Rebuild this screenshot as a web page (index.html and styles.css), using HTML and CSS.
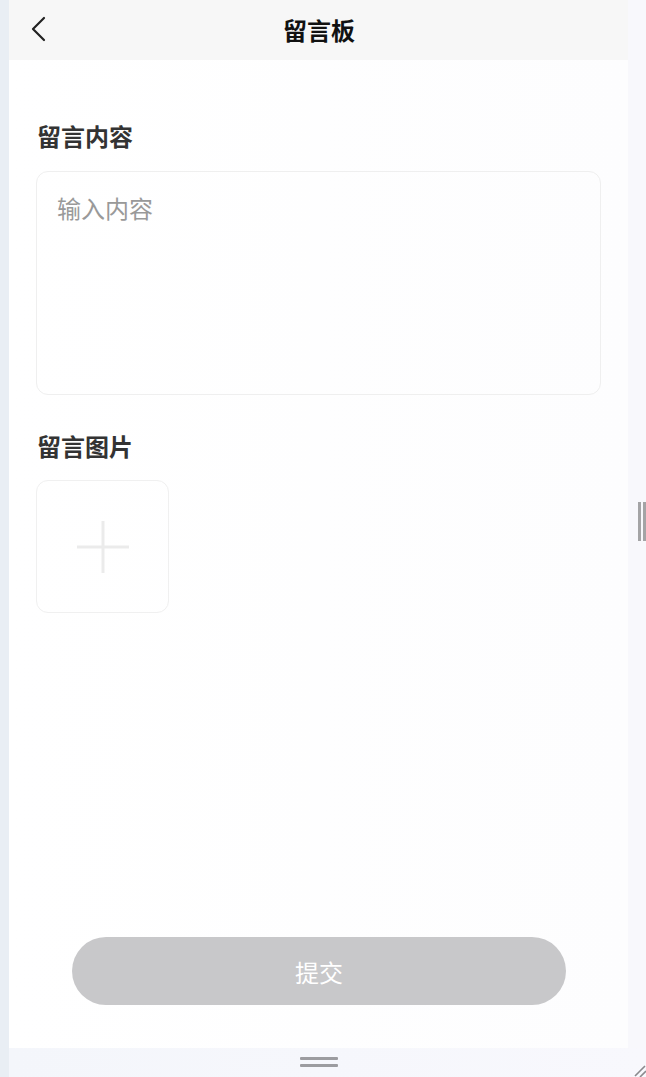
FILE: index.html
```html
<!DOCTYPE html>
<html lang="zh-CN">
<head>
<meta charset="utf-8">
<title>留言板</title>
<link rel="stylesheet" href="styles.css">
</head>
<body>
<div class="frame">
  <div class="left-strip"></div>
  <div class="right-col">
    <div class="row">
      <main class="app">
        <header class="topbar">
          <svg class="back" width="16" height="26" viewBox="0 0 16 26"><path d="M13 2 L2 13 L13 24" fill="none" stroke="#222" stroke-width="2.2" stroke-linecap="round" stroke-linejoin="round"/></svg>
          <h1 class="title">留言板</h1>
        </header>
        <section class="content">
          <h2 class="label">留言内容</h2>
          <div class="textarea"><span class="placeholder">输入内容</span></div>
          <h2 class="label label-img">留言图片</h2>
          <div class="upload">
            <svg width="54" height="54" viewBox="0 0 54 54"><path d="M27 1 V53 M1 27 H53" stroke="#ebebeb" stroke-width="3"/></svg>
          </div>
        </section>
        <div class="actions">
          <button class="submit">提交</button>
        </div>
      </main>
      <aside class="right-strip">
        <div class="grip"><span></span><span></span></div>
      </aside>
    </div>
    <footer class="bottom-bar">
      <div class="handle"><span></span><span></span></div>
      <svg class="resize" width="14" height="14" viewBox="0 0 14 14"><path d="M13 3 L3 13 M14 8 L8 14" stroke="#8a8a8e" stroke-width="1.6"/></svg>
    </footer>
  </div>
</div>
</body>
</html>
```

FILE: styles.css
```css
* { box-sizing: border-box; margin: 0; padding: 0; }
html, body { width: 646px; height: 1077px; overflow: hidden; }
body {
  font-family: "Noto Sans CJK SC", "Noto Sans", sans-serif;
  background: #f5f6fb;
}
.frame { display: flex; height: 1077px; }
.left-strip { width: 9px; background: #e9eef4; flex: none; }
.right-col { flex: 1; display: flex; flex-direction: column; }
.row { display: flex; flex: 1; }
.app {
  width: 619px;
  display: flex;
  flex-direction: column;
  background: linear-gradient(90deg, #ffffff 0%, #fdfdfe 100%);
}
.topbar {
  height: 60px;
  background: #f7f7f7;
  display: flex;
  align-items: center;
  justify-content: center;
  position: relative;
}
.back { position: absolute; left: 22px; top: 16px; }
.title {
  font-size: 24px;
  font-weight: 700;
  color: #111;
  line-height: 32px;
  margin-left: 1px;
}
.content { padding: 60px 27px 0 27px; flex: 1; }
.label {
  font-size: 24px;
  font-weight: 700;
  color: #333;
  line-height: 32px;
  padding-left: 1px;
}
.textarea {
  margin-top: 19px;
  height: 224px;
  border: 1px solid #efefef;
  border-radius: 12px;
  padding: 20px 20px;
}
.placeholder { font-size: 24px; line-height: 32px; color: #999; }
.label-img { margin-top: 35px; }
.upload {
  margin-top: 18px;
  width: 133px;
  height: 133px;
  border: 1px solid #f0f0f0;
  border-radius: 12px;
  display: flex;
  align-items: center;
  justify-content: center;
}
.actions { padding: 0 62px 43px 63px; }
.submit {
  width: 494px;
  height: 68px;
  border: none;
  border-radius: 34px;
  background: #c8c8ca;
  color: #fff;
  font-family: inherit;
  font-size: 24px;
}
.right-strip {
  width: 18px;
  background: #f8f8fc;
  display: flex;
  align-items: center;
  justify-content: flex-end;
}
.grip { display: flex; gap: 2px; height: 39px; margin-bottom: 5px; }
.grip span { width: 3px; background: #a4a4a6; }
.bottom-bar {
  height: 29px;
  background: linear-gradient(90deg, #f4f6fb, #f8f8fd);
  position: relative;
  display: flex;
  justify-content: center;
  padding-top: 9px;
  padding-right: 17px;
}
.handle { display: flex; flex-direction: column; gap: 4px; width: 38px; }
.handle span { height: 3px; background: #9c9ca0; border-radius: 1px; }
.resize { position: absolute; right: 0; bottom: 0; }
```
